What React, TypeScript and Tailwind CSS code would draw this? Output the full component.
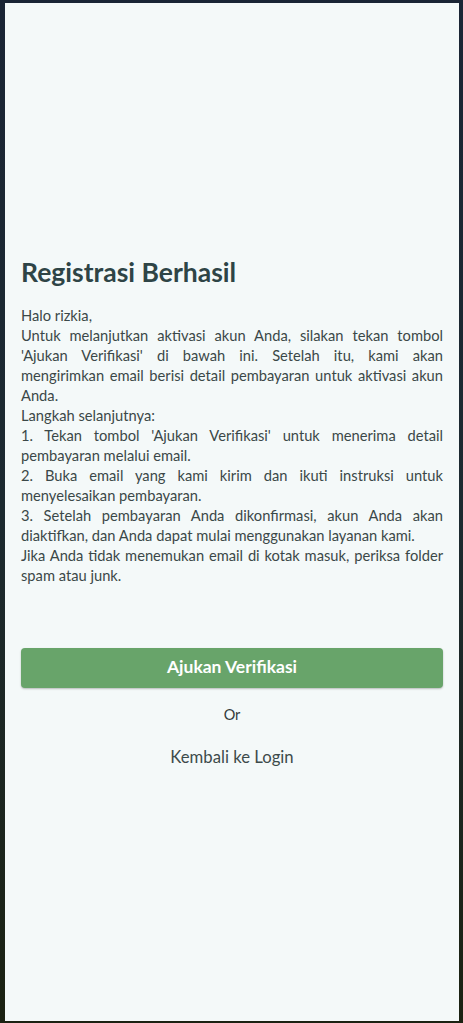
export default function App() {
  return (
    <div className="min-h-screen h-[1023px] flex bg-gradient-to-b from-[#1a2535] via-[#1c2a30] to-[#1b2212] pt-[3px] pl-[5px] pr-[4px] pb-[2px] font-['Lato',sans-serif]">
      <div className="flex-1 bg-[#f4f9f9] flex flex-col justify-center px-4">
        <h1 className="text-[26.5px] leading-8 font-bold text-[#2e4446] mb-[17px]">Registrasi Berhasil</h1>
        <div className="text-[14.7px] leading-5 text-[#3b4848] text-justify">
          <p>Halo rizkia,</p>
          <p>Untuk melanjutkan aktivasi akun Anda, silakan tekan tombol 'Ajukan Verifikasi' di bawah ini. Setelah itu, kami akan mengirimkan email berisi detail pembayaran untuk aktivasi akun Anda.</p>
          <p>Langkah selanjutnya:</p>
          <p>1. Tekan tombol 'Ajukan Verifikasi' untuk menerima detail pembayaran melalui email.</p>
          <p>2. Buka email yang kami kirim dan ikuti instruksi untuk menyelesaikan pembayaran.</p>
          <p>3. Setelah pembayaran Anda dikonfirmasi, akun Anda akan diaktifkan, dan Anda dapat mulai menggunakan layanan kami.</p>
          <p>Jika Anda tidak menemukan email di kotak masuk, periksa folder spam atau junk.</p>
        </div>
        <button className="mt-[63px] h-10 w-full rounded-[4px] bg-[#68a46a] text-white font-bold text-[17.5px] shadow-[0_1px_2px_rgba(0,0,0,0.25)]">
          Ajukan Verifikasi
        </button>
        <p className="mt-[17px] text-center text-[14.5px] leading-5 text-[#333b3b]">Or</p>
        <p className="mt-5 text-center text-[16.7px] leading-6 text-[#3d4b4b]">Kembali ke Login</p>
      </div>
    </div>
  );
}
